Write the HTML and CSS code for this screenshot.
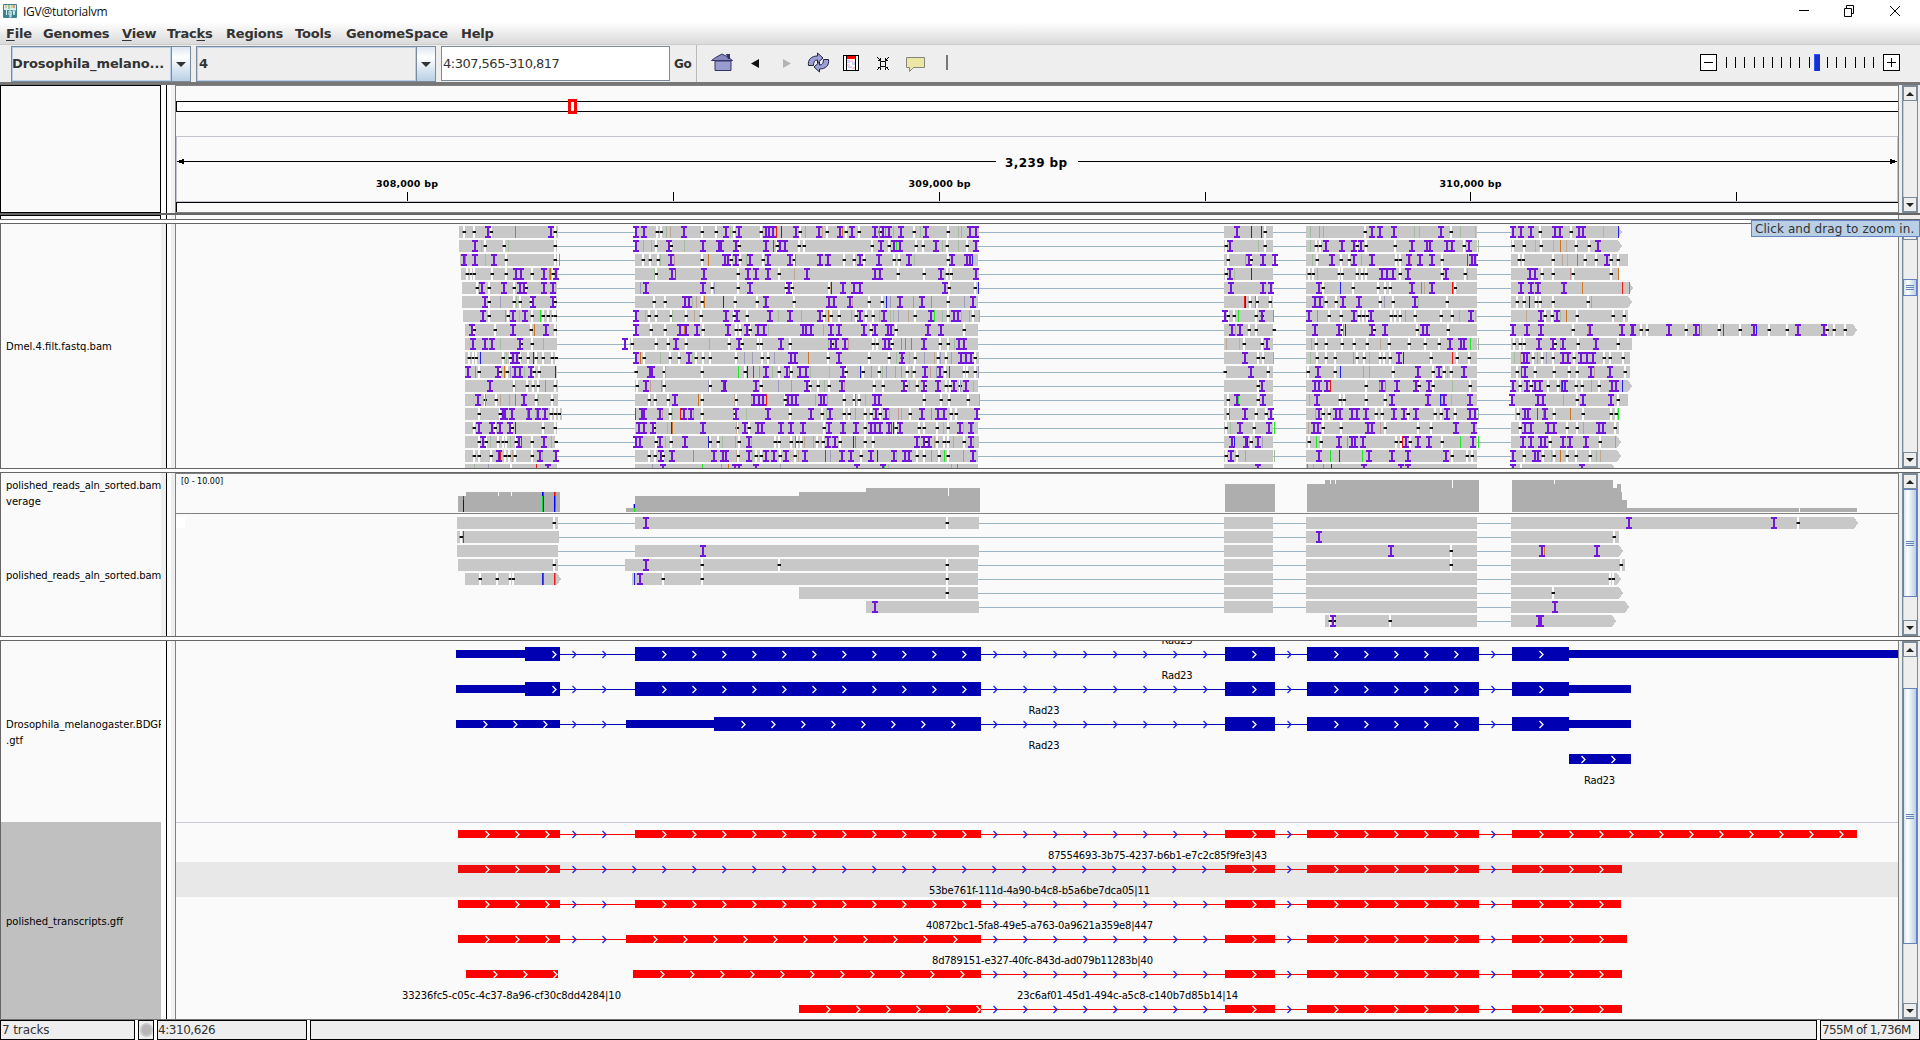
FILE: index.html
```html
<!DOCTYPE html>
<html lang="en">
<head>
<meta charset="utf-8">
<title>IGV@tutorialvm</title>
<link rel="stylesheet" href="styles.css">
</head>
<body>
<div class="window">
  <header class="titlebar">
    <svg class="app-icon" width="14" height="14" viewBox="0 0 14 14"><rect width="14" height="14" rx="1" fill="#3e8390"/><path d="M1 1h12v5H1z" fill="#d8ece8"/><path d="M3 1v3M9 1v3" stroke="#e8a33c"/><path d="M6 1v4" stroke="#55b04a"/><path d="M11 1v3" stroke="#d9534a"/><path d="M3.500 6v5M6 7h2v4H6zM8 7v6H6M10 6l1 5 1-5" stroke="#d7f0f2" fill="none"/></svg>
    <span class="title">IGV@tutorialvm</span>
    <svg class="controls" width="102" height="12" viewBox="0 0 102 12" fill="none" stroke="#000"><path d="M0 5.500h10M45.500 3.500h7v8h-7zM47.500 3V.5h7v8h-2M91 1l10 10M101 1l-10 10"/></svg>
  </header>
  <nav class="menubar">
    <span class="m1"><u>F</u>ile</span><span class="m2">Genomes</span><span class="m3"><u>V</u>iew</span><span class="m4">Trac<u>k</u>s</span><span class="m5">Regions</span><span class="m6">Tools</span><span class="m7">GenomeSpace</span><span>Help</span>
  </nav>
  <div class="toolbar">
    <div class="combo genome"><span>Drosophila_melano...</span><i></i></div>
    <div class="combo chrom"><span>4</span><i></i></div>
    <div class="locus">4:307,565-310,817</div>
    <div class="go">Go</div>
    <svg class="icons" width="250" height="28" viewBox="704 50 250 28">
      <path d="M715 61h16v9.500h-16z" fill="#9a9cce" stroke="#34346a"/><path d="M711.500 60.500l4-3 6.500-3.500 6 3 4.500 3.500z" fill="#8688be" stroke="#34346a"/><path d="M726 54h4v5h-2z" fill="#34346a"/>
      <path d="M751 63.500l8-4.500v9z" fill="#111"/><path d="M791 63.500l-8-4.500v9z" fill="#b4b4b4"/>
      <g fill="#9b9ed8" stroke="#23253f"><path d="M808.500 65.500c-1-6 3-9.500 9-9.500v-3l5.500 5-5.500 5v-3c-3 0-4 2-4 5.500z"/><path d="M828.500 59.500c1 6-3 9.500-9 9.500v3l-5.500-5 5.500-5v3c3 0 4-2 4-5.500z"/></g>
      <g shape-rendering="crispEdges"><path d="M843.500 55.500h15v15h-15z" fill="#fff" stroke="#000"/><path d="M846.500 55v16M855.500 55v16" stroke="#000"/><path d="M847 56h8v3h-8z" fill="#f00"/><path d="M847 60h3v3h-3zM852 62h3v3h-3zM848 66h4v2h-4z" fill="#cfcffa"/><path d="M850 60h3v2h-3zM847 64h3v2h-3zM852 67h3v2h-3z" fill="#f8cfd5"/></g>
      <path d="M880.500 61.500h5v5h-5zM877 57l3.500 3.500M889 57l-3.500 3.500M877 70l3.500-3.500M889 70l-3.500-3.500M878 60.500h2.500v-2.500M888 60.500h-2.500v-2.500M878 67.500h2.500v2.500M888 67.500h-2.500v2.500" fill="none" stroke="#000"/>
      <path d="M906.500 57.500h18v10h-11l-4 4v-4h-3z" fill="#ece7a4" stroke="#85857c"/>
      <path d="M947 55v15" stroke="#777" stroke-width="2"/>
    </svg>
    <svg class="zoomer" width="202" height="20" viewBox="1699 53 202 20" shape-rendering="crispEdges">
      <path d="M1700.500 54.500h16v16h-16zM1883.500 54.500h16v16h-16z" fill="#fff" stroke="#000"/>
      <path d="M1704 62.500h9M1887 62.500h9M1891.500 58v9M1726.500 57v11M1735.500 57v11M1744.500 57v11M1754.500 57v11M1763.500 57v11M1772.500 57v11M1781.500 57v11M1790.500 57v11M1799.500 57v11M1809.500 57v11M1827.500 57v11M1836.500 57v11M1845.500 57v11M1855.500 57v11M1864.500 57v11M1873.500 57v11" stroke="#000"/>
      <path d="M1814 54h6v17h-6z" fill="#1431d0"/><path d="M1814 54h6v1h-5v16h-1z" fill="#3355ff"/>
    </svg>
  </div>

  <main class="workspace">
    <section class="panel header-panel">
      <div class="names framed"></div><div class="gutter"></div>
      <svg id="ruler" class="data" viewBox="176 85 1722 128"></svg>
      <div class="bar"><div class="sb"><b class="up"></b><em></em><b class="down"></b></div></div>
    </section>
    <div class="thick"></div>
    <section class="panel sliver"><div class="names framed"></div><div class="gutter"></div><div class="data"></div><div class="bar"></div></section>
    <div class="divider"></div>
    <section class="panel reads-panel">
      <div class="names"><p class="dmel">Dmel.4.filt.fastq.bam</p></div><div class="gutter"></div>
      <svg id="reads" class="data" viewBox="176 224 1722 244"></svg>
      <div class="bar"><div class="sb"><b class="up"></b><em></em><s class="t3"></s><em></em><b class="down"></b></div></div>
    </section>
    <div class="divider"></div>
    <section class="panel polished-panel">
      <div class="names"><p class="cov">polished_reads_aln_sorted.bam</p><p class="verage">verage</p><p class="aln">polished_reads_aln_sorted.bam</p></div><div class="gutter"></div>
      <svg id="polished" class="data" viewBox="176 473 1722 163"></svg>
      <div class="bar"><div class="sb"><b class="up"></b><s class="t4"></s><em></em><b class="down"></b></div></div>
    </section>
    <div class="divider"></div>
    <section class="panel genes-panel">
      <div class="names"><div class="gtf"><p>Drosophila_melanogaster.BDGP</p><p>.gtf</p></div><div class="gff"><p>polished_transcripts.gff</p></div></div><div class="gutter"></div>
      <svg id="genes" class="data" viewBox="176 641 1722 378"></svg>
      <div class="bar"><div class="sb"><b class="up"></b><em class="e5"></em><s class="t5"></s><em></em><b class="down"></b></div></div>
    </section>
  </main>

  <footer class="status">
    <div class="s1">7 tracks</div><div class="s2"><i></i></div><div class="s3">4:310,626</div><div class="s4"></div><div class="s5">755M of 1,736M</div>
  </footer>
  <div class="tooltip">Click and drag to zoom in.</div>
</div>
<script src="tracks.js"></script>
</body>
</html>
```
FILE: styles.css
```css
* { box-sizing: border-box; }
body { margin: 0; overflow: hidden; background: #eee; font-family: "DejaVu Sans", sans-serif; color: #333; }
p { margin: 0; }
.window { width: 1920px; height: 1040px; display: flex; flex-direction: column; position: relative; overflow: hidden; }

.titlebar { height: 22px; flex: none; background: #fff; display: flex; align-items: flex-start; padding: 4px 19px 0 3px; }
.title { font: 12px/16px "Open Sans", sans-serif; color: #111; margin: 0 0 0 6px; letter-spacing: -.25px; }
.controls { margin-left: auto; margin-top: 1px; }

.menubar { height: 22px; flex: none; display: flex; padding-left: 6px; background: linear-gradient(#fff, #dadada); font: bold 13px/24px "DejaVu Sans", sans-serif; letter-spacing: -.2px; white-space: nowrap; }
.menubar u { text-underline-offset: 2px; }
.m1 { width: 37px; } .m2 { width: 79px; } .m3 { width: 45px; } .m4 { width: 59px; }
.m5 { width: 69px; } .m6 { width: 51px; } .m7 { width: 115px; }

.toolbar { height: 38px; flex: none; display: flex; align-items: flex-start; padding: 1px 19px 0 11px; border-top: 1px solid #ccc; background: #eee; }
.combo { height: 36px; display: flex; border: 1px solid #7a8a99; margin-right: 5px; font: bold 13px/34px "DejaVu Sans", sans-serif; letter-spacing: -.1px; }
.combo span { flex: 1; border: 1px solid #b8cfe5; line-height: 31px; padding-left: 1px; white-space: nowrap; overflow: hidden; }
.combo i { width: 19px; border-left: 1px solid #7a8a99; background: linear-gradient(#dde8f3, #fff 30%, #b8cfe5); display: flex; align-items: center; justify-content: center; }
.combo i::after { content: ""; border: 5px solid transparent; border-top-color: #333; border-bottom: 0; }
.genome { width: 180px; } .genome span { padding-left: 0; text-indent: -1px; } .chrom { width: 240px; }
.locus { width: 229px; height: 35px; border: 1px solid #7a8a99; background: #fff; font-size: 13px; line-height: 33px; letter-spacing: -.5px; padding-left: 1px; }
.go { width: 27px; height: 37px; margin-top: -1px; border-right: 1px solid #bbb; font: bold 12px/38px "DejaVu Sans", sans-serif; padding-left: 4px; letter-spacing: -.3px; }
.icons { margin: 4px 0 0 7px; }
.zoomer { margin: 7px 0 0 auto; }

.workspace { height: 938px; flex: none; display: flex; flex-direction: column; border-top: 3px solid #777; border-bottom: 1px solid #707070; }
.panel { display: grid; grid-template-columns: 161px 15px 1722px 22px; overflow: hidden; }
.panel > * { min-height: 0; }
.header-panel { height: 128px; }
.thick { height: 2px; background: #666; }
.sliver { height: 4px; }
.divider { height: 5px; border: solid #666; border-width: 1px 0; background: #fdfdfd; }
.reads-panel { height: 244px; }
.polished-panel { height: 163px; }
.genes-panel { height: 378px; }
.names { border-left: 1px solid #666; background: #fafafa; color: #000; font-size: 10px; line-height: 16px; white-space: nowrap; overflow: hidden; }
.names p { padding-left: 5px; }
.framed { border: 1px solid #000; }
.sliver .framed { border-bottom: 0; }
.gutter { background: linear-gradient(90deg, #eee 5px, #000 5px 6px, #fdfdfd 6px 10px, #eee 10px 14px, #808080 14px); }
.header-panel .gutter, .sliver .gutter, .genes-panel .gutter { background: linear-gradient(90deg, #fdfdfd 5px, #000 5px 6px, #fdfdfd 6px 10px, #f2f2f2 10px 14px, #808080 14px); }
.data { display: block; width: 1722px; height: 100%; background: #fafafa; }
.data text { font-family: "DejaVu Sans", sans-serif; font-size: 10px; fill: #000; text-anchor: middle; }
.dmel { padding-top: 115px; }
.cov { padding-top: 5px; }
.cov, .aln { letter-spacing: -.07px; }
.aln { padding-top: 58px; }
.gtf { height: 181px; padding-top: 76px; }
.gff { height: 197px; background: #c0c0c0; padding-top: 92px; }

.bar { border-left: 1px solid #808080; padding: 0 2px 0 3px; background: #eee; }
.sb { height: 100%; display: flex; flex-direction: column; border: 1px solid #7a8a99; }
.sb b { height: 15px; flex: none; border: 1px solid #fff; outline: 1px solid #7a8a99; outline-offset: -1px; background: #eee; display: flex; align-items: center; justify-content: center; }
.sb b::after { content: ""; border: 4.5px solid transparent; }
.sb .up::after { border-bottom-color: #222; border-top: 0; }
.sb .down::after { border-top-color: #222; border-bottom: 0; }
.sb em { flex: 1; border-left: 1px solid #b8cfe5; }
.sb s { flex: none; border: 1px solid #6382bf; background: linear-gradient(90deg, #d4e2f0, #fff 30%, #b8cfe5); display: flex; align-items: center; justify-content: center; }
.sb s::after { content: ""; width: 8px; height: 5px; background: linear-gradient(#6382bf 1px, transparent 1px 2px, #6382bf 2px 3px, transparent 3px 4px, #6382bf 4px); }
.t3 { height: 17px; }
.reads-panel .sb em:first-of-type { flex: none; height: 39px; }
.t4 { height: 108px; } .t5 { height: 256px; }
.sb .e5 { flex: none; height: 31px; }

.status { height: 20px; flex: none; display: flex; gap: 3px; background: #fff; font-size: 12px; line-height: 18px; letter-spacing: -.1px; }
.status > div { border: 1px solid #000; background: #eee; padding-left: 1px; white-space: nowrap; overflow: hidden; }
.s1 { width: 135px; } .s2 { width: 16px; } .s3 { width: 150px; } .s4 { width: 1507px; } .s5 { width: 100px; letter-spacing: -.6px; }
.status > .s3 { padding-left: 0; letter-spacing: -.45px; }
.s2 i { display: block; width: 13px; height: 14px; margin-top: 2px; border-radius: 50%; background: #b5b5b5; border: 2px solid #c6c6c6; }

.tooltip { position: absolute; left: 1751px; top: 220px; width: 169px; height: 17px; border: 1px solid #6382bf; background: #b8cfe5; font-size: 12px; line-height: 16px; letter-spacing: .08px; padding-left: 3px; white-space: nowrap; }
```
FILE: tracks.js
```js
const rect = (x, y, w, h, f) => `<rect x="${x}" y="${y}" width="${w}" height="${h}" fill="${f}"/>`;
const line = (x1, x2, y, c) => rect(x1, y, x2 - x1, 1, c);
const SNP = { r: '#f01818', b: '#2020e8', g: '#20e820', o: '#cd7420', p: '#c49a9a', s: '#a4bca0', t: '#bca894', l: '#a09cc0' };

/* Draws marks such as "D68 I134 r209": deletions, insertions and mismatches. */
function marks(list, y, base, scale) {
  let gaps = '', snps = '', ins = '';
  for (const m of list.trim().split(/\s+/)) {
    if (!m) continue;
    const x = Math.round(base + m.slice(1) / scale);
    if (m[0] === 'D') gaps += rect(x - 1, y, 2, 12, '#fafafa') + rect(x - 2, y + 5, 4, 2, '#777') + rect(x - 1, y + 5, 3, 2, '#111');
    else if (m[0] === 'I') ins += `<path d="M${x - 3} ${y}h6v2h-2v8h2v2h-6v-2h2v-8h-2z" fill="#7316d8"/>`;
    else snps += rect(x, y, 1, 12, SNP[m[0]]);
  }
  return gaps + snps + ins;
}
function block(x1, x2, y, arrow) {
  if (!arrow) return rect(x1, y, x2 - x1, 12, '#c8c8c8');
  return `<path d="M${x1} ${y}H${x2 - 4}L${x2} ${y + 6}L${x2 - 4} ${y + 12}H${x1}z" fill="#c8c8c8"/>`;
}

/* Each entry: start, first-exon end, marks left of the gap, marks of exon 2, marks of exons 3 to 5, end, pointed end */
const reads = [
[53,329,'D68 D96 I134 D142 o209 I310 D322','I548 I571 D607 D620 s633 t645 I683 D733 D772 I800 s812 D824 I837 D899 I912 I922 I932 r940 b956 I996 D1007 t1021 I1061 p1070 D1084 I1120 o1125 D1137 I1153 D1174 I1219 o1228 D1232 I1240 g1247 I1258 s1268 I1292 D1328 s1345 I1360 D1422 s1450 t1460 I1485 I1502','I81 b112 b132 D142 s240 l259 t267 D360 I374 I392 I422 s466 s478 I525 D546 s567 s599 I681 I700 I722 D740 I774 I784 D809 I825 I835 s877 b911',920,1],
[53,328,'I97 s114 D126 D180 s189 D322','I548 t569 s592 D606 I640 D648 s684 I736 I780 I788 I828 D837 I912 r933 D943 I953 I966 D1006 D1018 D1210 I1234 D1258 I1270 g1278 I1289 D1334 D1352 I1390 s1406 D1419 s1450 D1475 I1502','D56 I65 s127 D142 s239 D252 D262 I274 I309 I335 D342 I350 D361 D425 I461 I495 I502 I538 I549 D576 I586 s606 D681 D705 s729 D742 s768 o783 t798 D820 D847 I866',920,1],
[57,328,'I66 o71 I97 s127 I151 D184 D322 g334','D568 D589 D610 s616 I648 p656 D733 o751 I797 I805 D815 I830 D841 s856 I868 D904 I918 I980 D990 o995 I1064 I1086 D1130 D1160 I1176 D1188 I1229 D1272 D1286 I1313 s1327 D1423 I1434 I1475 I1485 b1490','D62 p97 I106 D110 I137 I164 s244 D254 I288 D308 I335 D324 t350 I374 D426 D436 I455 p458 I479 I505 D526 r582 I592 I598 D694 D704 D769 t789 s800 o822 D838 D863 I886 D896 D910',933,0],
[59,329,'D75 D86 D95 D145 D186 I212 I226 D258 I290 g304 o307 D316 I325','D606 s598 I650 r659 I739 D834 I862 I884 I918 D950 t992 I1027 I1217 I1231 D1282 D1356 I1404 D1419 D1430 I1500','D56 I66 s73 b112 D237 D246 t254 D302 D309 D341 D353 D362 I396 I408 I421 D436 I453 D526 I535 D577 p582 I719 I729 D744 D769 p805 D812 D895 o911',912,0],
[62,328,'D104 p110 I118 D137 I180 D206 I225 I235 D240 I291 I315 s322','l561 I576 I736 D762 l768 D834 I868 D968 I977 D985 D1090 b1096 t1093 I1128 I1160 I1176 I1413 D1424 D1499 b1507','I67 I137 I155 I260 D268 b304 D333 D388 D403 D414 I461 o481 t488 I505 r548 g550 D556 I699 I722 I736 I792 o831 r920 o935',944,1],
[62,328,'I126 D138 l169 D206 s212 D223 I260 D256 I315 D323','D600 D631 I686 I696 s706 p717 D733 o740 b793 D827 D887 I912 s906 D992 I1090 I1102 I1148 p1154 D1200 D1238 b1250 l1259 I1288 l1323 I1350 g1376 D1423 l1468 I1492','r95 b97 D108 o119 D124 D152 I250 I262 p267 D274 D297 I311 I346 D392 l400 D421 I468 s475 D538 D690 D705 b717 D731 D741 D769 D845 p851',941,1],
[65,328,'I121 D138 l181 D190 I204 s222 I237 D258 g281 D288 D301 D315 D323','I548 s573 D585 D604 D646 s650 D690 t711 D732 I800 D822 I831 D859 I924 s946 I980 t1010 I1065 D1075 o1087 D1094 D1118 t1150 D1165 I1176 D1192 D1212 s1228 I1243 s1259 s1267 l1283 t1311 D1331 I1374 g1382 s1406 D1422 I1440 I1450 s1458 t1480 D1492 s1508','I55 D62 D74 g82 D122 D134 I136 g158 I238 g254 D282 D308 I335 D346 D356 D363 I373 D416 D425 D435 p447 D468 D524 D548 s564 I590 s600 t709 I743 D752 D767 I777 s783 o797 D822 D899 D924',933,0],
[70,328,'I89 D95 D154 I204 D256 o262 I296 D321','I548 D592 D631 I673 o682 I688 I720 D735 I807 D829 D841 I860 D867 I890 I908 s918 I1015 I1026 I1040 t1071 I1095 I1117 I1187 s1183 D1206 I1217 I1253 I1263 D1277 I1367 I1402 D1468','I70 t77 I87 D106 D122 D161 I250 I303 D309 b315 g311 I374 D380 I403 D473 I485 I495 D540 I681 I712 I743 D812 I849 p845 I919 r938 I943 D960 D973 I1022 D1059 I1080 r1086 l1092 D1130 r1140 D1176 I1207 g1212 b1210 D1239 D1278 I1303 I1359 D1366 D1380 D1405',1431,1],
[70,328,'I92 I125 I146 s167 I224 D227 D258 t287','I518 D538 D604 D638 I660 D690 t752 D810 I838 D845 D890 D900 I954 D981 s1087 I1096 D1097 I1108 I1134 p1142 D1211 D1224 I1246 I1256 D1265 g1290 o1303 o1320 I1355 r1354 D1401 D1421 s1440 I1454 I1466','t57 D96 s84 D135 I146 t242 D252 D274 D309 D336 D364 t392 D412 D456 D490 D520 I544 I568 I575 g588 s606 D684 D696 D706 I738 I768 D773 I790 s783 D823 I862 D910',940,0],
[70,328,'D82 D92 D102 b113 D177 s185 D196 I204 I215 D225 D245 b259 D268 D289 D314 D324','I548 o561 D572 s616 D643 D670 I697 s706 D716 D735 D757 D829 l850 l874 D901 D919 l936 I984 I993 o1031 D1087 I1118 D1200 D1258 s1277 I1294 D1293 s1312 D1331 l1355 t1384 D1395 l1400 D1418 l1430 I1459 I1474 I1488 D1499','I97 D127 D137 p158 s240 D255 D275 D293 l334 D341 D357 s367 D393 D400 D414 I433 b442 D504 r549 D560 D586 s684 t697 I705 I713 D725 p734 l754 D745 D769 I790 I801 D815 I829 I842 I855 D880 D892 D922',936,0],
[70,328,'I77 g99 D108 I163 D168 o178 D188 l197 I210 I225 s236 I254 D262 D278 b323','D549 I587 I593 D627 p630 D733 g835 D853 b860 r875 l892 I912 s930 D949 I971 o976 D982 I1008 I1024 s1035 s1089 I1129 D1136 b1177 D1183 l1206 D1229 s1238 l1250 p1274 l1290 D1308 t1318 D1326 I1357 p1373 l1390 I1401 D1415 r1424 D1467 D1476 D1499 l1507','D55 I111 D149 D235 I257 D293 b304 p355 p367 D421 I475 D507 I521 D531 s538 D547 I574 D690 r700 I707 D730 D770 D804 D821 I851 p859 I893 D925',936,0],
[70,331,'I140 D206 s211 D244 D259 D273 g295 D322','D551 I576 p589 l620 D628 D757 l751 I795 b797 I885 D900 l946 l984 I1027 D1036 D1057 s1074 D1090 I1125 p1132 D1215 D1241 I1299 D1304 s1313 D1336 I1355 D1357 I1394 D1418 D1427 I1440 l1457 D1456 I1474 s1492','D127 I135 I250 I260 I277 r284 D361 l390 I397 g404 I429 I470 D476 I498 D507 s549 D588 I681 D697 I712 D720 I730 I741 D757 D779 b789 I796 r787 D820 D831 p851 D870 I897 I906 b920',941,1],
[70,329,'I106 g125 D126 D156 t169 t192 o210 I235 D268 s274 D314','D585 D603 D638 I657 o723 D733 t822 D828 s870 I880 I892 I903 r912 D965 I975 I985 I998 t1050 I1066 I1076 p1084 D1130 D1158 o1163 D1174 s1190 I1217 I1229 D1356 D1402 D1424 D1477 t1510','D62 I80 g82 D126 I137 s237 I254 D304 D313 D362 D404 I418 I496 b522 I532 p525 s547 I588 I679 I737 I747 t790 D822 I834 I895 D910',933,0],
[70,342,'D110 D167 I175 I182 I201 o243 I250 I275 l268 I293 D311 D322 D334','r547 I565 I572 I615 p622 D645 s650 r673 I683 I704 p709 D733 I830 D826 s857 I918 D979 I1038 D1070 s1080 I1091 D1132 D1145 p1161 D1190 D1206 I1222 g1219 I1248 D1231 s1258 p1281 t1292 D1317 I1349 g1376 I1395 I1410 D1430 D1444 I1503','o64 D60 I97 D121 D144 I155 I260 D268 p250 D282 I296 I306 I330 I343 I362 D384 D396 I422 I444 D454 I470 D511 D525 I537 D555 I588 I598 s606 D692 I707 I715 r733 I751 g748 D770 s805 o806 D834 D895 g911 D905',912,0],
[70,328,'D96 I109 I145 D154 I168 I195 D201 b211 D289 D322','I557 I571 I596 D599 s635 b648 o650 I736 t828 D832 I853 D866 I890 I902 I954 I982 I1016 D1074 I1090 I1128 s1130 I1165 D1190 I1206 I1219 I1231 I1258 r1264 b1269 I1288 D1277 D1342 D1356 D1392 s1408 D1421 I1457 s1465 I1486 l1490','D56 s66 I88 D118 I151 g162 t235 I248 I256 D268 D308 I366 I375 p391 D404 D475 D504 I557 I597 D697 I708 I722 I757 I772 D800 D822 p835 I868 I877 D903',912,0],
[70,328,'D110 g120 I121 D130 s141 D162 D175 D186 s196 D212 I222 r226 D258 I291 t311 D324','I548 I560 D605 I616 s629 D646 I685 b749 D756 D778 s789 t827 I865 D836 s871 D938 D950 D982 o995 D1000 D1011 t1019 t1045 D1055 D1071 I1086 I1105 D1121 b1155 o1163 D1190 D1213 I1335 I1355 D1360 I1369 t1384 D1392 D1410 D1421 t1437 D1466 I1486 s1492','I70 b75 I101 b103 D112 I126 l135 D238 g252 D263 I302 g320 I330 I337 I355 D427 D437 r441 I449 D458 I475 I499 D526 g566 I595 b593 g606 I703 I722 I742 I751 D762 I791 I805 I840 D872 l903',918,1],
[70,328,'D95 D108 D142 I165 r167 D181 D193 t201 D209 D258 I280 s285 I325','D585 D601 I620 D625 I649 g707 I768 p765 I792 I802 t828 D835 I865 s873 D884 D899 I912 I935 D952 I970 D995 t1001 I1021 r1077 I1125 I1150 l1093 D1180 I1206 b1224 I1271 s1278 I1303 I1313 D1336 D1356 l1376 D1398 g1411 D1423 l1464 I1492','D57 I67 D81 p97 s161 I260 g284 b302 g352 I368 I418 I453 I535 D548 D581 D592 I681 D705 I729 I737 D746 D770 s765 o783 D799 D820 D849 s862 t872',918,1],
[70,328,'s95 l134 D200 r270 I302','I624 l594 g734 l786 o807 I826 I838 I884 l953 I1167 I1240 g1243 s1255 p1432 o1448','I126 o232 t246 I357 g267 b286 I437 I453 I681 D700 I831',905,1]
];
const L = v => Math.round(440 + v / 2.8), R = v => Math.round(1200 + v / 2.178);
document.getElementById('reads').innerHTML = reads.map((r, i) => {
  const y = 226 + 14 * i;
  const lastStart = i === 13 ? 686 : 677;
  return line(L(r[0]), R(r[5]) - 6, y + 6, '#9ab5c5') + block(L(r[0]), L(r[1]), y) +
    block(i === 8 ? 630 : 635, i % 3 ? 978 : 979, y) +
    block(1224, 1273, y) + block(1306, 1477, y) + block(R(lastStart), R(r[5]), y, r[6]) +
    marks(r[2] + ' ' + r[3], y, 440, 2.8) + marks(r[4], y, 1200, 2.178);
}).join('');

/* Coverage histogram and polished alignments */
const cov = [[458,466,496],[466,560,492],[626,633,508],[633,635,504],[635,799,496],[799,866,492],[866,980,488],[1225,1275,484],[1307,1325,484],[1325,1479,480],[1512,1613,480],[1613,1617,488],[1617,1621,484],[1621,1622,492],[1622,1627,500],[1627,1857,508]];
let p = '<text x="202" y="483.500" style="font-size:8px">[0 - 10.00]</text>' + rect(176, 473, 1722, 1, '#808080');
p += cov.map(([a, b, t]) => rect(a, t, b - a, 512 - t, '#aeaeae')).join('');
p += [[498,492,4],[511,492,4],[948,488,8],[1330,480,4],[1335,480,4],[1452,480,8],[1554,480,4],[1799,508,4]].map(([x, y, h]) => rect(x, y, 1, h, '#fafafa')).join('');
p += [[463,496,4,'#f00'],[463,500,12,'#00f'],[542,492,4,'#00f'],[542,496,16,'#0d4'],[543,492,4,'#f00'],[543,496,16,'#00f'],[554,492,4,'#f00'],[554,496,16,'#00f'],[555,492,16,'#c05a10'],[555,508,4,'#0d0'],[634,504,4,'#00c'],[634,508,4,'#0e0']].map(([x, y, h, c]) => rect(x, y, 1, h, c)).join('');
p += rect(176, 513, 1722, 1, '#808080') + rect(176, 517, 9, 11, '#fff');
const E3 = [1224, 1273], E4 = [1306, 1477];
[
  [[[457,558],[635,979],E3,E4,[1511,1858,1]], 'D554 I646 D947 I1629 I1774 D1798'],
  [[[457,559],E3,E4,[1511,1619]], 'D461 r463 I1319 D1614'],
  [[[457,558],[635,979],E3,E4,[1511,1623,1]], 'I703 I1391 D1451 I1542 o1544 I1597'],
  [[[458,558],[625,978],E3,E4,[1511,1625]], 'D554 I646 D702 D779 D947 D1451 D1621'],
  [[[465,561,1],[632,978],E3,E4,[1511,1621,1]], 'D480 D497 D510 D513 b542 r543 r554 g555 b634 I640 D663 D702 D947 D1610 D1613'],
  [[[799,978],E3,E4,[1511,1623,1]], 'D947 D1553'],
  [[[866,979],E3,E4,[1511,1629,1]], 'I875 I1555'],
  [[[1325,1477],[1511,1616,1]], 'D1330 D1334 I1333 D1390 I1539 I1541']
].forEach(([b, m], i) => {
  const y = 517 + 14 * i;
  const from = i === 4 ? 632 : b[0][0];
  p += line(from, b[b.length - 1][0], y + 6, '#9ab5c5') + b.map(q => block(q[0], q[1], y, q[2])).join('') + marks(m, y, 0, 1);
});
document.getElementById('polished').innerHTML = p;

/* Gene models */
const chev = (x, y, c) => `<path shape-rendering="auto" d="M${x - 3.5} ${y - 3}l3.500 3.500l-3.500 3.500" fill="none" stroke="${c}" stroke-width="1.300"/>`;
function model(y, exons, color, arrow = '#2020f0') {
  let s = '';
  for (let i = 1; i < exons.length; i++) {
    const a = exons[i - 1][1], b = exons[i][0];
    if (b > a) {
      s += line(a, b, y, color);
      for (let x = a + 16; x < b - 1; x += 30) s += chev(x, y, arrow);
    }
  }
  for (const [a, b, h, off] of exons) {
    s += rect(a, y - h / 2, b - a, h, color);
    if (off) for (let x = a + off; x <= b; x += 30) s += chev(x, y, '#fff');
  }
  return s;
}
const N = '#0000b2', RED = '#f00';
const coding = [[1225,1275,14,31],[1307,1479,14,31],[1512,1569,14,31]];
let g = rect(176, 822, 1722, 1, '#c8c8d8') + rect(176, 862, 1722, 35, '#e8e8e8');
g += model(654, [[456,525,8],[525,560,14,31],[635,981,14,31],...coding,[1569,1898,8]], N);
g += model(689, [[456,525,8],[525,560,14,31],[635,981,14,31],...coding,[1569,1631,8]], N);
g += model(724, [[456,560,8,31],[626,714,8],[714,981,14,31],...coding,[1569,1631,8]], N);
g += model(759, [[1569,1631,10,16]], N);
const tail = end => [[1225,1275,8,31],[1307,1479,8,31],[1512,end,8,31]];
g += model(834, [[458,560,8,31],[635,981,8,31],...tail(1857)], RED);
g += model(869, [[458,560,8,31],...tail(1622)], '#ee0b0b');
g += model(904, [[458,560,8,31],[635,981,8,31],...tail(1621)], RED);
g += model(939, [[458,560,8,31],[626,981,8,31],...tail(1627)], RED);
g += model(974, [[466,558,8,31]], RED) + model(974, [[633,981,8,31],...tail(1622)], RED);
g += model(1009, [[799,981,8,31],...tail(1622)], RED);
g += [[1177,644,'Rad23',31],[1177,679,'Rad23',31],[1044,714,'Rad23',31],[1044,749,'Rad23',31],[1599.500,784,'Rad23',31],
  [1157.500,859,'87554693-3b75-4237-b6b1-e7c2c85f9fe3|43',219],[1039.500,894,'53be761f-111d-4a90-b4c8-b5a6be7dca05|11',221],
  [1039.500,929,'40872bc1-5fa8-49e5-a763-0a9621a359e8|447',227],[1042.500,964,'8d789151-e327-40fc-843d-ad079b11283b|40',221],
  [511.500,999,'33236fc5-c05c-4c37-8a96-cf30c8dd4284|10',219],[1127.500,999,'23c6af01-45d1-494c-a5c8-c140b7d85b14|14',221]
].map(([x, y, t, w]) => `<text x="${x}" y="${y}" textLength="${w}">${t}</text>`).join('');
document.getElementById('genes').innerHTML = g;

/* Ideogram and ruler */
let u = rect(176, 85, 1722, 1, '#808080') + rect(176, 101, 1722, 11, '#000') + rect(177, 102, 1721, 9, '#fff');
u += rect(568, 99, 9, 15, '#f00') + rect(571, 102, 3, 9, '#fff');
u += rect(176, 136, 1722, 1, '#c4c4cc') + rect(176, 136, 1, 66, '#c4c4d4') + rect(1897, 136, 1, 66, '#c4c4d4') + rect(176, 201, 1722, 1, '#c4c4cc');
u += line(177, 996, 161, '#000') + line(1078, 1897, 161, '#000') + '<path d="M177 161.500l7-3v6zM1897 161.500l-7-3v6z"/>';
u += [407, 673, 939, 1205, 1470, 1736].map(x => rect(x, 192, 1, 9, '#000')).join('');
u += rect(176, 202, 1722, 1, '#000') + rect(176, 202, 1, 10, '#000') + rect(176, 212, 1722, 1, '#808080');
u += '<text x="1036" y="166.500" textLength="62" style="font-weight:bold;font-size:12px">3,239 bp</text>';
u += [[407,'308,000 bp'],[939.500,'309,000 bp'],[1470.500,'310,000 bp']].map(([x, t]) => `<text x="${x}" y="187" textLength="62" style="font-weight:bold;font-size:9.500px">${t}</text>`).join('');
document.getElementById('ruler').innerHTML = u;
document.querySelectorAll('svg.data').forEach(s => s.setAttribute('shape-rendering', 'crispEdges'));
```
